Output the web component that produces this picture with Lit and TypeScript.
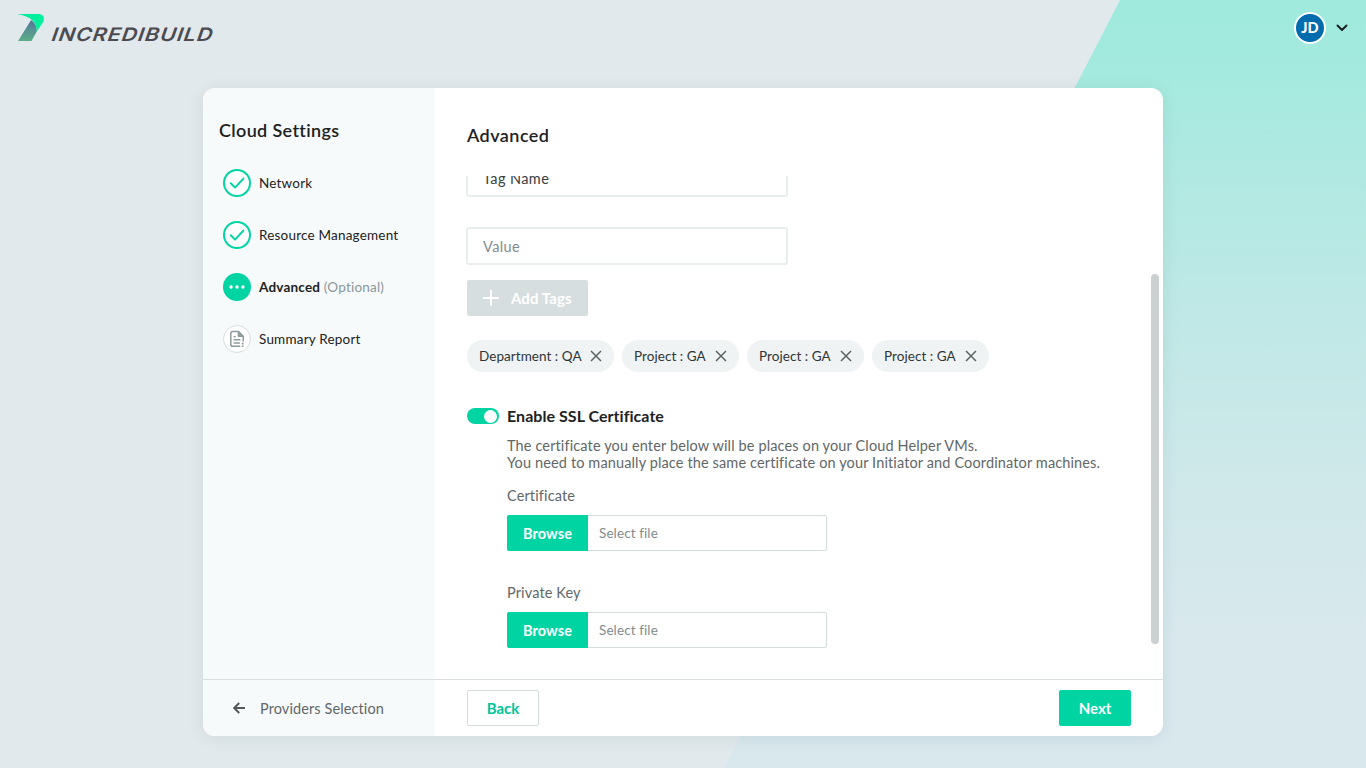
import { LitElement, html, css } from "lit";
import { customElement } from "lit/decorators.js";

const check = html`<svg class="step-icon" viewBox="0 0 28 28"><circle cx="14" cy="14" r="13" fill="#fff" stroke="#00d4a3" stroke-width="2"/><path d="M7.8 14.3 12 18.6 20.4 9.6" fill="none" stroke="#00d4a3" stroke-width="2" stroke-linecap="round" stroke-linejoin="round"/></svg>`;
const dots = html`<svg class="step-icon" viewBox="0 0 28 28"><circle cx="14" cy="14" r="14" fill="#00d4a3"/><g fill="#fff"><circle cx="8.1" cy="14" r="1.7"/><circle cx="14" cy="14" r="1.7"/><circle cx="19.9" cy="14" r="1.7"/></g></svg>`;
const report = html`<svg class="step-icon" viewBox="0 0 28 28"><circle cx="14" cy="14" r="13.5" fill="#fff" stroke="#d7dedf"/><g fill="none" stroke="#8e9a9c" stroke-width="1.5"><path d="M17.3 21.2H9.600q-1.800 0-1.800-1.800V8.400q0-1.800 1.800-1.800h6l4.600 4.700v5.200"/><path d="M15.2 6.8v4.700h4.800z" fill="#8e9a9c" stroke-width="1"/><path d="M10.6 11.8h2M10.6 14.7h6.800M10.6 18h6.300" stroke-width="1.4"/><path d="M19.7 17.8v1.600M19.700 20.400v1.500" stroke-width="1.7"/></g></svg>`;

@customElement("app-root")
export class AppRoot extends LitElement {
  static styles = css`
    :host { display: block; width: 1366px; height: 768px; overflow: hidden; position: relative; background: #e2e9ec; color: #1d2122; font: 400 14px/20px Lato, "Liberation Sans", sans-serif; }
    * { box-sizing: border-box; }
    svg { display: block; flex: none; }
    .backdrop { position: absolute; inset: 0; background: linear-gradient(#9feadd 0, #a2eadd 50px, #bde8e5 290px, #cfe8ea 480px, #d9e8ed 640px, #d9e8ed 100%); clip-path: polygon(1120px 0, 100% 0, 100% 100%, 724px 100%); }
    .page { position: relative; height: 100%; display: flex; flex-direction: column; align-items: center; }
    .top { width: 100%; height: 88px; padding: 12px 17px 0; display: flex; justify-content: space-between; align-items: flex-start; }
    .user { display: flex; align-items: center; gap: 9px; }
    .avatar { width: 32px; height: 32px; border: 2px solid #fff; border-radius: 50%; background: #006cae; color: #fff; display: flex; align-items: center; justify-content: center; font-weight: 900; font-size: 14.5px; letter-spacing: .2px; }
    .card { width: 960px; height: 648px; border-radius: 12px; overflow: hidden; background: #fff; display: grid; grid-template-columns: 232px 1fr; grid-template-rows: 591px 57px; }
    .shade { border-radius: 12px; box-shadow: 0 2px 16px rgba(40, 80, 100, .1); }
    .side { background: #f6fafb; padding: 30px 16px; }
    h1, h2 { margin: 0; font-size: 18px; line-height: 24px; font-weight: 600; letter-spacing: .35px; }
    h2 { letter-spacing: .45px; }
    .steps { display: flex; flex-direction: column; gap: 24px; padding: 27px 4px; }
    .step { display: flex; align-items: center; gap: 8px; height: 28px; font-size: 13.5px; letter-spacing: .2px; white-space: pre; }
    .step-icon { width: 28px; height: 28px; }
    .step b { font-weight: 700; }
    .muted { color: #8a9799; }
    .main { padding: 35px 32px 0; display: flex; flex-direction: column; position: relative; }
    .scroll { margin: 29px 0 0 -1px; height: 503px; overflow: hidden; display: flex; flex-direction: column; }
    .field { width: 322px; height: 38px; flex: none; border: 2px solid #e8eeee; border-radius: 3px; padding: 2px 15px 0; display: flex; align-items: center; font-size: 14.5px; letter-spacing: .4px; }
    .field + .field { margin-top: 30px; color: #7f8c8e; }
    .cut { margin-top: -17px; color: #3b4041; }
    .add { margin: 15px 0 0 1px; width: 121px; height: 36px; flex: none; border-radius: 2px; background: #d6dedf; color: #fff; display: flex; align-items: center; gap: 12px; padding-left: 16px; font-size: 15px; font-weight: 700; letter-spacing: .1px; }
    .tags { display: flex; gap: 8px; margin: 24px 0 0 1px; }
    .tag { height: 32px; width: 117px; border-radius: 16px; background: #eff3f4; padding: 0 12px; display: flex; align-items: center; justify-content: space-between; font-size: 13.5px; letter-spacing: .05px; white-space: nowrap; color: #303536; }
    .tag.wide { width: 147px; }
    .ssl { display: flex; gap: 8px; align-items: center; margin: 34px 0 0 1px; height: 20px; font-size: 16px; font-weight: 700; letter-spacing: .05px; }
    .toggle { width: 32px; height: 16px; border-radius: 8px; background: #00d4a3; padding: 1.5px 2px; display: flex; justify-content: flex-end; }
    .knob { width: 13px; height: 13px; border-radius: 50%; background: #fff; }
    .details { margin-left: 41px; padding-top: 11px; color: #616768; font-size: 14.5px; line-height: 17px; letter-spacing: .13px; white-space: nowrap; }
    .label { margin-top: 16px; height: 17px; }
    .file { display: flex; width: 320px; height: 36px; margin-top: 11px; border: 1px solid #d5dedf; border-radius: 2px; align-items: center; color: #7f8c8e; font-size: 13.5px; letter-spacing: .1px; }
    .browse { width: 81px; height: 36px; flex: none; margin: 0 11px 0 -1px; border-radius: 2px 0 0 2px; background: #00d4a3; color: #fff; font-weight: 700; font-size: 14.5px; display: flex; align-items: center; justify-content: center; }
    .key { margin-top: 33px; }
    .bar { position: absolute; right: 4px; top: 186px; width: 8px; height: 370px; border-radius: 4px; background: #cbd0d1; }
    .foot { border-top: 1px solid #d8dedf; display: flex; align-items: center; }
    .providers { background: #f6fafb; padding-left: 30px; gap: 15px; font-size: 14.5px; color: #616768; letter-spacing: .1px; }
    .providers span { padding-top: 2px; }
    .actions { padding: 0 32px; justify-content: space-between; }
    .btn { width: 72px; height: 36px; border-radius: 2px; display: flex; align-items: center; justify-content: center; font-size: 15px; font-weight: 700; border: 1px solid #d5dedf; color: #00c497; }
    .btn.primary { background: #00d4a3; border-color: #00d4a3; color: #fff; }
    .wordmark { font: italic 600 18.5px Inter, sans-serif; fill: #4b4b51; }
  `;

  tag(text: string, wide = false) {
    return html`<div class="tag ${wide ? "wide" : ""}"><span>${text}</span><svg width="12" height="12" viewBox="0 0 12 12"><path d="M1 1l10 10M11 1 1 11" stroke="#5d6364" stroke-width="1.5"/></svg></div>`;
  }

  file(label: string, cls = "") {
    return html`<div class="label ${cls}">${label}</div><div class="file"><span class="browse">Browse</span><span>Select file</span></div>`;
  }

  render() {
    return html`
      <div class="backdrop"></div>
      <div class="page">
        <header class="top">
          <svg width="200" height="34" viewBox="17 12 200 34">
            <defs><linearGradient id="leg" x1="0" y1="0" x2="0" y2="1"><stop offset="0" stop-color="#52759a"/><stop offset="1" stop-color="#5dae88"/></linearGradient></defs>
            <path d="M31 20Q36.500 23.500 37 31L31.500 41H18L30.500 21Z" fill="url(#leg)"/>
            <path d="M16.500 14H39C43.500 14.200 45 18 43.200 22L36.500 32Q38 17.500 16.500 14Z" fill="#00ef9d"/>
            <text class="wordmark" transform="translate(51 40.700) skewX(-9) scale(1.16 1)" x="0" y="0" textLength="138.500" lengthAdjust="spacing">INCREDIBUILD</text>
          </svg>
          <div class="user"><div class="avatar">JD</div><svg width="14" height="8" viewBox="0 0 14 8"><path d="M2.500 1.500 7 6l4.500-4.500" fill="none" stroke="#1d2122" stroke-width="2" stroke-linecap="round" stroke-linejoin="round"/></svg></div>
        </header>
        <div class="shade"><div class="card">
          <aside class="side">
            <h1>Cloud Settings</h1>
            <div class="steps">
              <div class="step">${check}<span>Network</span></div>
              <div class="step">${check}<span>Resource Management</span></div>
              <div class="step">${dots}<span><b>Advanced</b><span class="muted"> (Optional)</span></span></div>
              <div class="step">${report}<span>Summary Report</span></div>
            </div>
          </aside>
          <main class="main">
            <h2>Advanced</h2>
            <div class="scroll">
              <div class="field cut">Tag Name</div>
              <div class="field">Value</div>
              <div class="add"><svg width="16" height="16" viewBox="0 0 16 16"><path d="M8 0v16M0 8h16" stroke="#fff" stroke-width="2"/></svg>Add Tags</div>
              <div class="tags">${this.tag("Department : QA", true)}${this.tag("Project : GA")}${this.tag("Project : GA")}${this.tag("Project : GA")}</div>
              <div class="ssl"><span class="toggle"><span class="knob"></span></span><span>Enable SSL Certificate</span></div>
              <div class="details">
                <div>The certificate you enter below will be places on your Cloud Helper VMs.</div>
                <div>You need to manually place the same certificate on your Initiator and Coordinator machines.</div>
                ${this.file("Certificate")}${this.file("Private Key", "key")}
              </div>
            </div>
            <div class="bar"></div>
          </main>
          <div class="foot providers"><svg width="12" height="12" viewBox="0 0 12 12"><path d="M12 6H1.500M6.200 1 1.200 6l5 5" fill="none" stroke="#55595a" stroke-width="2"/></svg><span>Providers Selection</span></div>
          <div class="foot actions"><div class="btn">Back</div><div class="btn primary">Next</div></div>
        </div></div>
      </div>`;
  }
}
